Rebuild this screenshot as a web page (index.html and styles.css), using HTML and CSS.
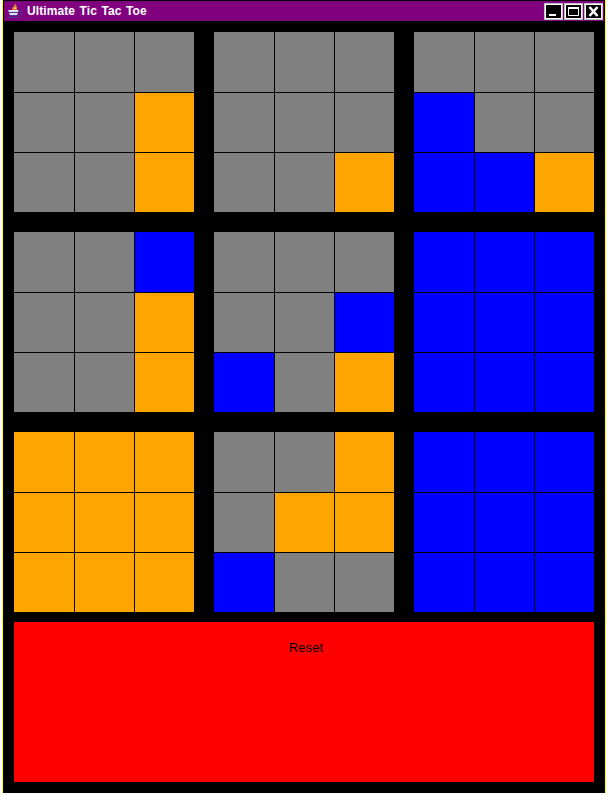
FILE: index.html
```html
<!DOCTYPE html>
<html lang="en">
<head>
  <meta charset="UTF-8">
  <title>Ultimate Tic Tac Toe</title>
  <link rel="stylesheet" href="styles.css">
</head>
<body>
  <div class="window">
    <div class="titlebar">
      <svg class="app-icon" width="16" height="16" viewBox="0 0 16 16">
        <path d="M8 0 L9 2 L10 4 L10 7 L5 7 L5 5 L7 3 Z" fill="#d87838"/>
        <path d="M8 3 L9 6 L7 6 Z" fill="#f8d070"/>
        <path d="M1 7 H12 L11 9 H2 Z" fill="#e0e0f4"/>
        <path d="M2 9 H11 V10 H2 Z" fill="#4a3a90"/>
        <path d="M2 10 H11 L10 12 H3 Z" fill="#e0e0f4"/>
        <path d="M3 12 H10 V13 H3 Z" fill="#4a3a90"/>
        <path d="M0 14 H13 V15 H0 Z" fill="#4a3a90"/>
        <path d="M11 8 H15 V11 L11 13" fill="none" stroke="#4a3a90"/>
      </svg>
      <span class="title">Ultimate Tic Tac Toe</span>
      <div class="controls">
        <div class="ctl"><svg width="15" height="13" viewBox="0 0 15 13"><rect x="3" y="9" width="7" height="2" fill="#fff"/></svg></div>
        <div class="ctl"><svg width="15" height="13" viewBox="0 0 15 13"><path d="M2.5 3.5 H12.5 V10.5 H2.5 Z" fill="none" stroke="#fff"/><rect x="2" y="2" width="11" height="2" fill="#fff"/></svg></div>
        <div class="ctl"><svg width="15" height="13" viewBox="0 0 15 13"><path d="M3.5 2 L11.5 11 M11.5 2 L3.5 11" stroke="#fff" stroke-width="2.6"/></svg></div>
      </div>
    </div>
    <div class="content">
      <div class="boards" id="boards"></div>
      <div class="reset">Reset</div>
    </div>
  </div>
  <script>
    // g = gris, o = naranja, b = azul
    var boards = [
      'gggggoggo', 'ggggggggo', 'gggbggbbo',
      'ggbggoggo', 'gggggbbgo', 'bbbbbbbbb',
      'ooooooooo', 'ggogoobgg', 'bbbbbbbbb'
    ];
    var root = document.getElementById('boards');
    boards.forEach(function (cells) {
      var board = document.createElement('div');
      board.className = 'board';
      cells.split('').forEach(function (c) {
        var cell = document.createElement('div');
        cell.className = 'cell ' + c;
        board.appendChild(cell);
      });
      root.appendChild(board);
    });
  </script>
</body>
</html>
```

FILE: styles.css
```css
body {
  margin: 0;
  background: #ffffff;
}
.window {
  box-sizing: border-box;
  width: 604px;
  height: 793px;
  margin-left: 2px;
  border-left: 1px solid #ffff00;
  border-right: 1px solid #ffff00;
  background: #000000;
  padding-top: 1px;
}
.titlebar {
  display: flex;
  align-items: center;
  height: 20px;
  margin: 0 1px;
  padding-left: 3px;
  background: #800080;
}
.app-icon {
  flex: none;
}
.title {
  margin-left: 4px;
  font-family: "Liberation Sans", Arial, sans-serif;
  font-size: 12px;
  font-weight: bold;
  letter-spacing: 0.1px;
  word-spacing: 1px;
  color: #ffffff;
}
.controls {
  display: flex;
  gap: 3px;
  margin-left: auto;
  margin-right: 2px;
}
.ctl {
  display: flex;
  width: 15px;
  height: 13px;
  background: #000000;
  border: 1px solid #ffffff;
  box-shadow: 0 0 0 1px #c0c0c0;
}
.content {
  padding: 11px 11px 0;
}
.boards {
  display: grid;
  grid-template-columns: repeat(3, 180px);
  gap: 20px;
}
.board {
  display: grid;
  grid-template-columns: 60px 59px 59px;
  grid-template-rows: 60px 59px 59px;
  gap: 1px;
}
.cell.g { background: #808080; }
.cell.o { background: #ffa500; }
.cell.b { background: #0000ff; }
.reset {
  box-sizing: border-box;
  height: 160px;
  margin-top: 10px;
  padding-top: 18px;
  padding-left: 4px;
  background: #ff0000;
  color: #000000;
  text-align: center;
  font-family: "Liberation Sans", Arial, sans-serif;
  font-size: 13px;
  letter-spacing: 0.1px;
}
```
